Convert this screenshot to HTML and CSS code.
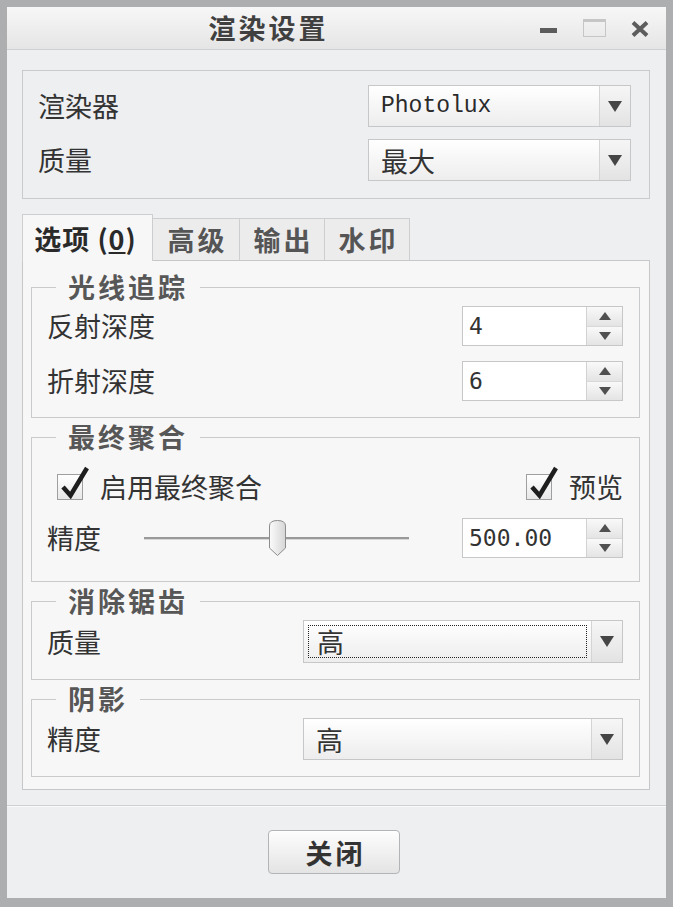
FILE: index.html
```html
<html><head><meta charset="utf-8">
    <link rel="stylesheet" href="styles.css">
</head>
<body>
<div class="window">
    <div class="titlebar">
        <div class="title">渲染设置</div>
        <div class="controls">
            <span class="ctl-min"></span>
            <span class="ctl-max"></span>
            <svg class="ctl-close" width="20" height="16" viewBox="0 0 20 16">
                <path d="M3 1.5 L17 14.5 M17 1.5 L3 14.5" stroke="#5c5c5c" stroke-width="4" fill="none"/>
            </svg>
        </div>
    </div>

    <div class="content">
        <div class="box">
            <div class="row">
                <span class="label">渲染器</span>
                <div class="select narrow">
                    <span class="select-value mono">Photolux</span>
                    <span class="select-arrow"></span>
                </div>
            </div>
            <div class="row">
                <span class="label">质量</span>
                <div class="select narrow">
                    <span class="select-value">最大</span>
                    <span class="select-arrow"></span>
                </div>
            </div>
        </div>

        <div class="tabs">
            <div class="tab active">选项 (<u>0</u>)</div>
            <div class="tab">高级</div>
            <div class="tab">输出</div>
            <div class="tab">水印</div>
        </div>

        <div class="panel">
            <fieldset class="group">
                <legend>光线追踪</legend>
                <div class="rows">
                    <div class="row">
                        <span class="label">反射深度</span>
                        <div class="spin">
                            <span class="spin-value">4</span>
                            <span class="spin-buttons"><span class="up"></span><span class="down"></span></span>
                        </div>
                    </div>
                    <div class="row">
                        <span class="label">折射深度</span>
                        <div class="spin">
                            <span class="spin-value">6</span>
                            <span class="spin-buttons"><span class="up"></span><span class="down"></span></span>
                        </div>
                    </div>
                </div>
            </fieldset>

            <fieldset class="group gather">
                <legend>最终聚合</legend>
                <div class="row check-row">
                    <label class="check first">
                        <span class="check-box">
                            <svg class="tick" width="30" height="34" viewBox="0 0 30 34">
                                <path d="M4 22 L11.5 30.5 L28 3" stroke="#1e1e1e" stroke-width="4.5" fill="none"/>
                            </svg>
                        </span>
                        <span>启用最终聚合</span>
                    </label>
                    <label class="check">
                        <span class="check-box">
                            <svg class="tick" width="30" height="34" viewBox="0 0 30 34">
                                <path d="M4 22 L11.5 30.5 L28 3" stroke="#1e1e1e" stroke-width="4.5" fill="none"/>
                            </svg>
                        </span>
                        <span>预览</span>
                    </label>
                </div>
                <div class="row slider-row">
                    <span class="label slider-label">精度</span>
                    <div class="slider">
                        <svg class="thumb" width="19" height="38" viewBox="0 0 19 38">
                            <defs>
                                <linearGradient id="th" x1="0" y1="0" x2="1" y2="0">
                                    <stop offset="0" stop-color="#fbfbfb"/>
                                    <stop offset="1" stop-color="#d6d6d6"/>
                                </linearGradient>
                            </defs>
                            <path d="M1.5 7 Q1.5 1.5 9.5 1.5 Q17.5 1.5 17.5 7 V29 L9.5 36.5 L1.5 29 Z" fill="url(#th)" stroke="#8c8c8c"/>
                        </svg>
                    </div>
                    <div class="spin">
                        <span class="spin-value">500.00</span>
                        <span class="spin-buttons"><span class="up"></span><span class="down"></span></span>
                    </div>
                </div>
            </fieldset>

            <fieldset class="group">
                <legend>消除锯齿</legend>
                <div class="row">
                    <span class="label">质量</span>
                    <div class="select wide tall">
                        <span class="select-value focus">高</span>
                        <span class="select-arrow"></span>
                    </div>
                </div>
            </fieldset>

            <fieldset class="group">
                <legend>阴影</legend>
                <div class="row">
                    <span class="label">精度</span>
                    <div class="select wide">
                        <span class="select-value">高</span>
                        <span class="select-arrow"></span>
                    </div>
                </div>
            </fieldset>
        </div>
    </div>

    <div class="footer">
        <button class="btn">关闭</button>
    </div>
</div>
</body></html>
```

FILE: styles.css
```css
* {
    box-sizing: border-box;
}

body {
    margin: 0;
    font-family: "Noto Sans CJK SC", sans-serif;
    color: #333;
}

.window {
    width: 673px;
    height: 907px;
    border: 7px solid #adaeb0;
    border-bottom-width: 9px;
    background: #eeeff1;
    display: flex;
    flex-direction: column;
}

/* title bar */
.titlebar {
    height: 43px;
    flex: none;
    display: flex;
    align-items: center;
    background: linear-gradient(#f7f7f7, #e5e5e6);
    border-bottom: 1px solid #cfd0d1;
}

.title {
    flex: 1;
    text-align: center;
    font-weight: bold;
    font-size: 27px;
    letter-spacing: 3px;
    line-height: 30px;
    color: #404040;
}

.controls {
    width: 136px;
    display: flex;
    align-items: center;
    padding-left: 10px;
}

.ctl-min {
    width: 17px;
    height: 5px;
    margin-top: 5px;
    background: #5c5c5c;
}

.ctl-max {
    width: 23px;
    height: 18px;
    margin-left: 26px;
    border: 1px solid #c6c6c6;
    border-top-width: 3px;
}

.ctl-close {
    margin-left: 24px;
    margin-top: 2px;
}

/* body */
.content {
    flex: 1;
    display: flex;
    flex-direction: column;
    padding: 20px 16px 15px 15px;
}

.box {
    border: 1px solid #c9cacb;
    padding: 14px 18px 17px 15px;
    display: flex;
    flex-direction: column;
    gap: 12px;
}

.row {
    display: flex;
    align-items: center;
    justify-content: space-between;
}

.label {
    font-size: 27px;
    line-height: 30px;
    color: #333;
}

.select {
    display: flex;
    height: 42px;
    border: 1px solid #c6c7c8;
    background: linear-gradient(#ffffff, #ededee);
}

.select.narrow {
    width: 263px;
}

.select.wide {
    width: 320px;
}

.select.tall {
    height: 43px;
}

.select-value {
    flex: 1;
    display: flex;
    align-items: center;
    padding-left: 12px;
    font-size: 27px;
    color: #333;
}

.select-value.mono {
    font-family: "Liberation Mono", monospace;
    font-size: 23px;
    color: #2a2a2a;
}

.select-value.focus {
    outline: 1px dotted #222;
    outline-offset: -5px;
    padding-left: 13px;
}

.select-arrow {
    width: 31px;
    flex: none;
    border-left: 1px solid #d4d4d5;
    display: flex;
    align-items: center;
    justify-content: center;
    background: linear-gradient(#f6f6f6, #e3e3e4);
}

.select-arrow::after {
    content: "";
    border-left: 7px solid transparent;
    border-right: 7px solid transparent;
    border-top: 11px solid #454545;
}

/* tabs */
.tabs {
    display: flex;
    align-items: flex-end;
    height: 46px;
    margin-top: 15px;
    flex: none;
}

.tab {
    height: 42px;
    width: 85px;
    border: 1px solid #cdcecf;
    border-bottom: 0;
    border-left: 0;
    background: #ececed;
    display: flex;
    align-items: center;
    justify-content: center;
    font-weight: bold;
    font-size: 27px;
    letter-spacing: 3px;
    color: #555;
    padding-left: 3px;
}

.tab:nth-child(2) {
    width: 87px;
}

.tab.active {
    width: 131px;
    height: 47px;
    margin-bottom: -1px;
    border-left: 1px solid #cdcecf;
    background: #f7f7f8;
    color: #2a2a2a;
    position: relative;
    z-index: 1;
    letter-spacing: 1px;
    padding-left: 0;
    padding-right: 4px;
}

.panel {
    flex: 1;
    border: 1px solid #c6c7c8;
    background: #f7f7f8;
    padding: 12px 9px 0 8px;
}

/* group boxes */
.group {
    margin: 0;
    min-width: 0;
    border: 1px solid #c9cacb;
    padding: 5px 16px 16px 15px;
}

.group + .group {
    margin-top: 5px;
}

.group legend {
    margin-left: 9px;
    padding: 0 12px;
    font-weight: bold;
    font-size: 27px;
    letter-spacing: 3px;
    line-height: 28px;
    color: #575757;
}

.rows {
    display: flex;
    flex-direction: column;
    gap: 15px;
}

.gather {
    padding-top: 15px;
    padding-bottom: 23px;
}

.check-row {
    height: 42px;
}

.slider-row {
    margin-top: 10px;
}

.check {
    display: flex;
    align-items: center;
    font-size: 27px;
    line-height: 30px;
    color: #333;
}

.check-box {
    width: 26px;
    height: 26px;
    flex: none;
    margin-right: 17px;
    border: 1px solid #9e9fa0;
    background: linear-gradient(#ffffff, #e8e8e9);
    position: relative;
}

/* the tick runs past the box edge */
.tick {
    position: absolute;
    left: 1px;
    top: -10px;
}

.check.first {
    margin-left: 10px;
}

.slider-label {
    width: 97px;
    flex: none;
}

.slider {
    width: 265px;
    height: 40px;
    display: flex;
    align-items: center;
    background: linear-gradient(#9a9a9a, #9a9a9a) no-repeat 0 19px / 100% 2px,
                linear-gradient(#d8d8d8, #d8d8d8) no-repeat 0 21px / 100% 1px;
}

.thumb {
    margin-left: 124px;
}

/* spin boxes */
.spin {
    margin-left: auto;
    display: flex;
    width: 161px;
    height: 40px;
    border: 1px solid #c6c7c8;
    background: #fff;
}

.spin-value {
    flex: 1;
    display: flex;
    align-items: center;
    padding-left: 6px;
    font-family: "DejaVu Sans Mono", monospace;
    font-size: 23px;
    color: #333;
}

.spin-buttons {
    width: 36px;
    flex: none;
    border-left: 1px solid #d2d2d3;
    display: flex;
    flex-direction: column;
}

.spin-buttons span {
    flex: 1;
    display: flex;
    align-items: center;
    justify-content: center;
    background: linear-gradient(#f9f9f9, #e4e4e5);
}

.spin-buttons span + span {
    border-top: 1px solid #d8d8d9;
}

.up::after {
    content: "";
    border-left: 6px solid transparent;
    border-right: 6px solid transparent;
    border-bottom: 8px solid #505050;
}

.down::after {
    content: "";
    border-left: 6px solid transparent;
    border-right: 6px solid transparent;
    border-top: 8px solid #505050;
}

/* footer */
.footer {
    height: 93px;
    flex: none;
    border-top: 1px solid #cfd0d1;
    box-shadow: inset 0 1px 0 #fafafa;
    display: flex;
    align-items: center;
    justify-content: center;
}

.btn {
    width: 132px;
    height: 44px;
    margin-left: -5px;
    border: 1px solid #b3b4b5;
    border-radius: 4px;
    background: linear-gradient(#fdfdfd, #e4e4e5);
    box-shadow: inset 0 1px 0 #fff;
    font-family: "Noto Sans CJK SC", sans-serif;
    font-weight: bold;
    font-size: 27px;
    letter-spacing: 3px;
    padding: 0 0 0 3px;
    color: #333;
}
```
